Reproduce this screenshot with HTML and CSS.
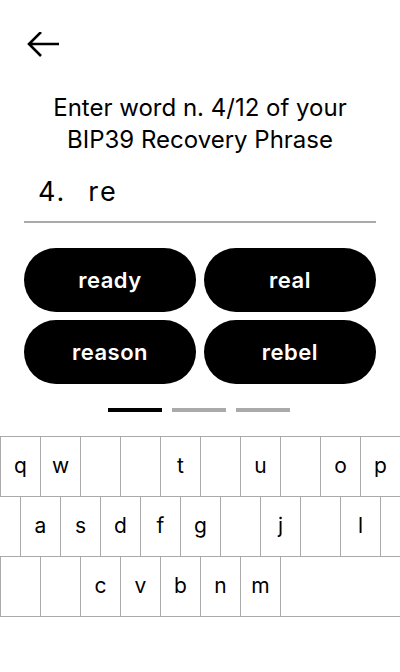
FILE: index.html
```html
<!DOCTYPE html>
<html lang="en">
<head>
<meta charset="utf-8">
<title>Enter word</title>
<link rel="stylesheet" href="styles.css">
</head>
<body>
<div class="screen">
  <div class="topbar">
    <svg class="back" width="40" height="28" viewBox="0 0 40 28" aria-label="Back">
      <path d="M35 12 H5 M17 0 L5 12 L17 24" fill="none" stroke="#000" stroke-width="2.6" stroke-linecap="butt" stroke-linejoin="miter"/>
    </svg>
  </div>
  <h1 class="title">Enter word n. 4/12 of your<br>BIP39 Recovery Phrase</h1>
  <div class="entry">
    <span class="num">4.</span><span class="typed">re</span>
  </div>
  <div class="suggestions">
    <button class="pill">ready</button>
    <button class="pill">real</button>
    <button class="pill">reason</button>
    <button class="pill">rebel</button>
  </div>
  <div class="pager">
    <span class="dash active"></span><span class="dash"></span><span class="dash"></span>
  </div>
  <div class="keyboard">
    <div class="row">
      <span class="key">q</span><span class="key">w</span><span class="key off">e</span><span class="key off">r</span><span class="key">t</span><span class="key off">y</span><span class="key">u</span><span class="key off">i</span><span class="key">o</span><span class="key">p</span>
    </div>
    <div class="row row-mid">
      <span class="key">a</span><span class="key">s</span><span class="key">d</span><span class="key">f</span><span class="key">g</span><span class="key off">h</span><span class="key">j</span><span class="key off">k</span><span class="key">l</span>
    </div>
    <div class="row">
      <span class="key off">z</span><span class="key off">x</span><span class="key">c</span><span class="key">v</span><span class="key">b</span><span class="key">n</span><span class="key">m</span>
    </div>
  </div>
</div>
</body>
</html>
```
FILE: styles.css
```css
* { box-sizing: border-box; }
html, body { margin: 0; padding: 0; background: #fff; }
body { font-family: Inter, "Noto Sans", sans-serif; color: #000; }
.screen { width: 400px; height: 672px; overflow: hidden; }
.topbar { padding: 32px 0 0 24px; height: 60px; }
.back { display: block; }
.title {
  margin: 32px 0 0;
  font-weight: 400;
  font-size: 24px;
  line-height: 32px;
  text-align: center;
}
.entry {
  margin: 20px 24px 0;
  height: 47px;
  border-bottom: 2px solid #aaa;
  display: flex;
  align-items: flex-start;
  font-family: Inter, sans-serif;
  font-size: 27px;
  letter-spacing: 2px;
  line-height: 32px;
  padding-left: 14px;
}
.typed { margin-left: 22px; }
.suggestions {
  margin: 25px 24px 0;
  display: grid;
  grid-template-columns: 1fr 1fr;
  gap: 8px;
}
.pill {
  height: 64px;
  border: none;
  border-radius: 32px;
  background: #000;
  color: #fff;
  font-family: Inter, sans-serif;
  font-weight: 600;
  font-size: 22px;
  letter-spacing: 0.5px;
  padding: 0;
}
.pager {
  margin-top: 24px;
  display: flex;
  justify-content: center;
  gap: 10px;
  height: 4px;
  padding-right: 2px;
}
.dash { width: 54px; height: 4px; background: #aaa; }
.dash.active { background: #000; }
.keyboard {
  margin-top: 24px;
  border-top: 1px solid #aaa;
  overflow: hidden;
  width: 400px;
}
.row {
  display: flex;
  height: 60px;
  border-bottom: 1px solid #aaa;
}
.row-mid { padding-left: 20px; }
.key {
  flex: 0 0 41px;
  width: 41px;
  margin-right: -1px;
  border-left: 1px solid #aaa;
  border-right: 1px solid #aaa;
  display: flex;
  align-items: center;
  justify-content: center;
  padding-bottom: 3px;
  font-size: 21px;
  font-family: Inter, sans-serif;
}
.key.off { color: transparent; }
```
